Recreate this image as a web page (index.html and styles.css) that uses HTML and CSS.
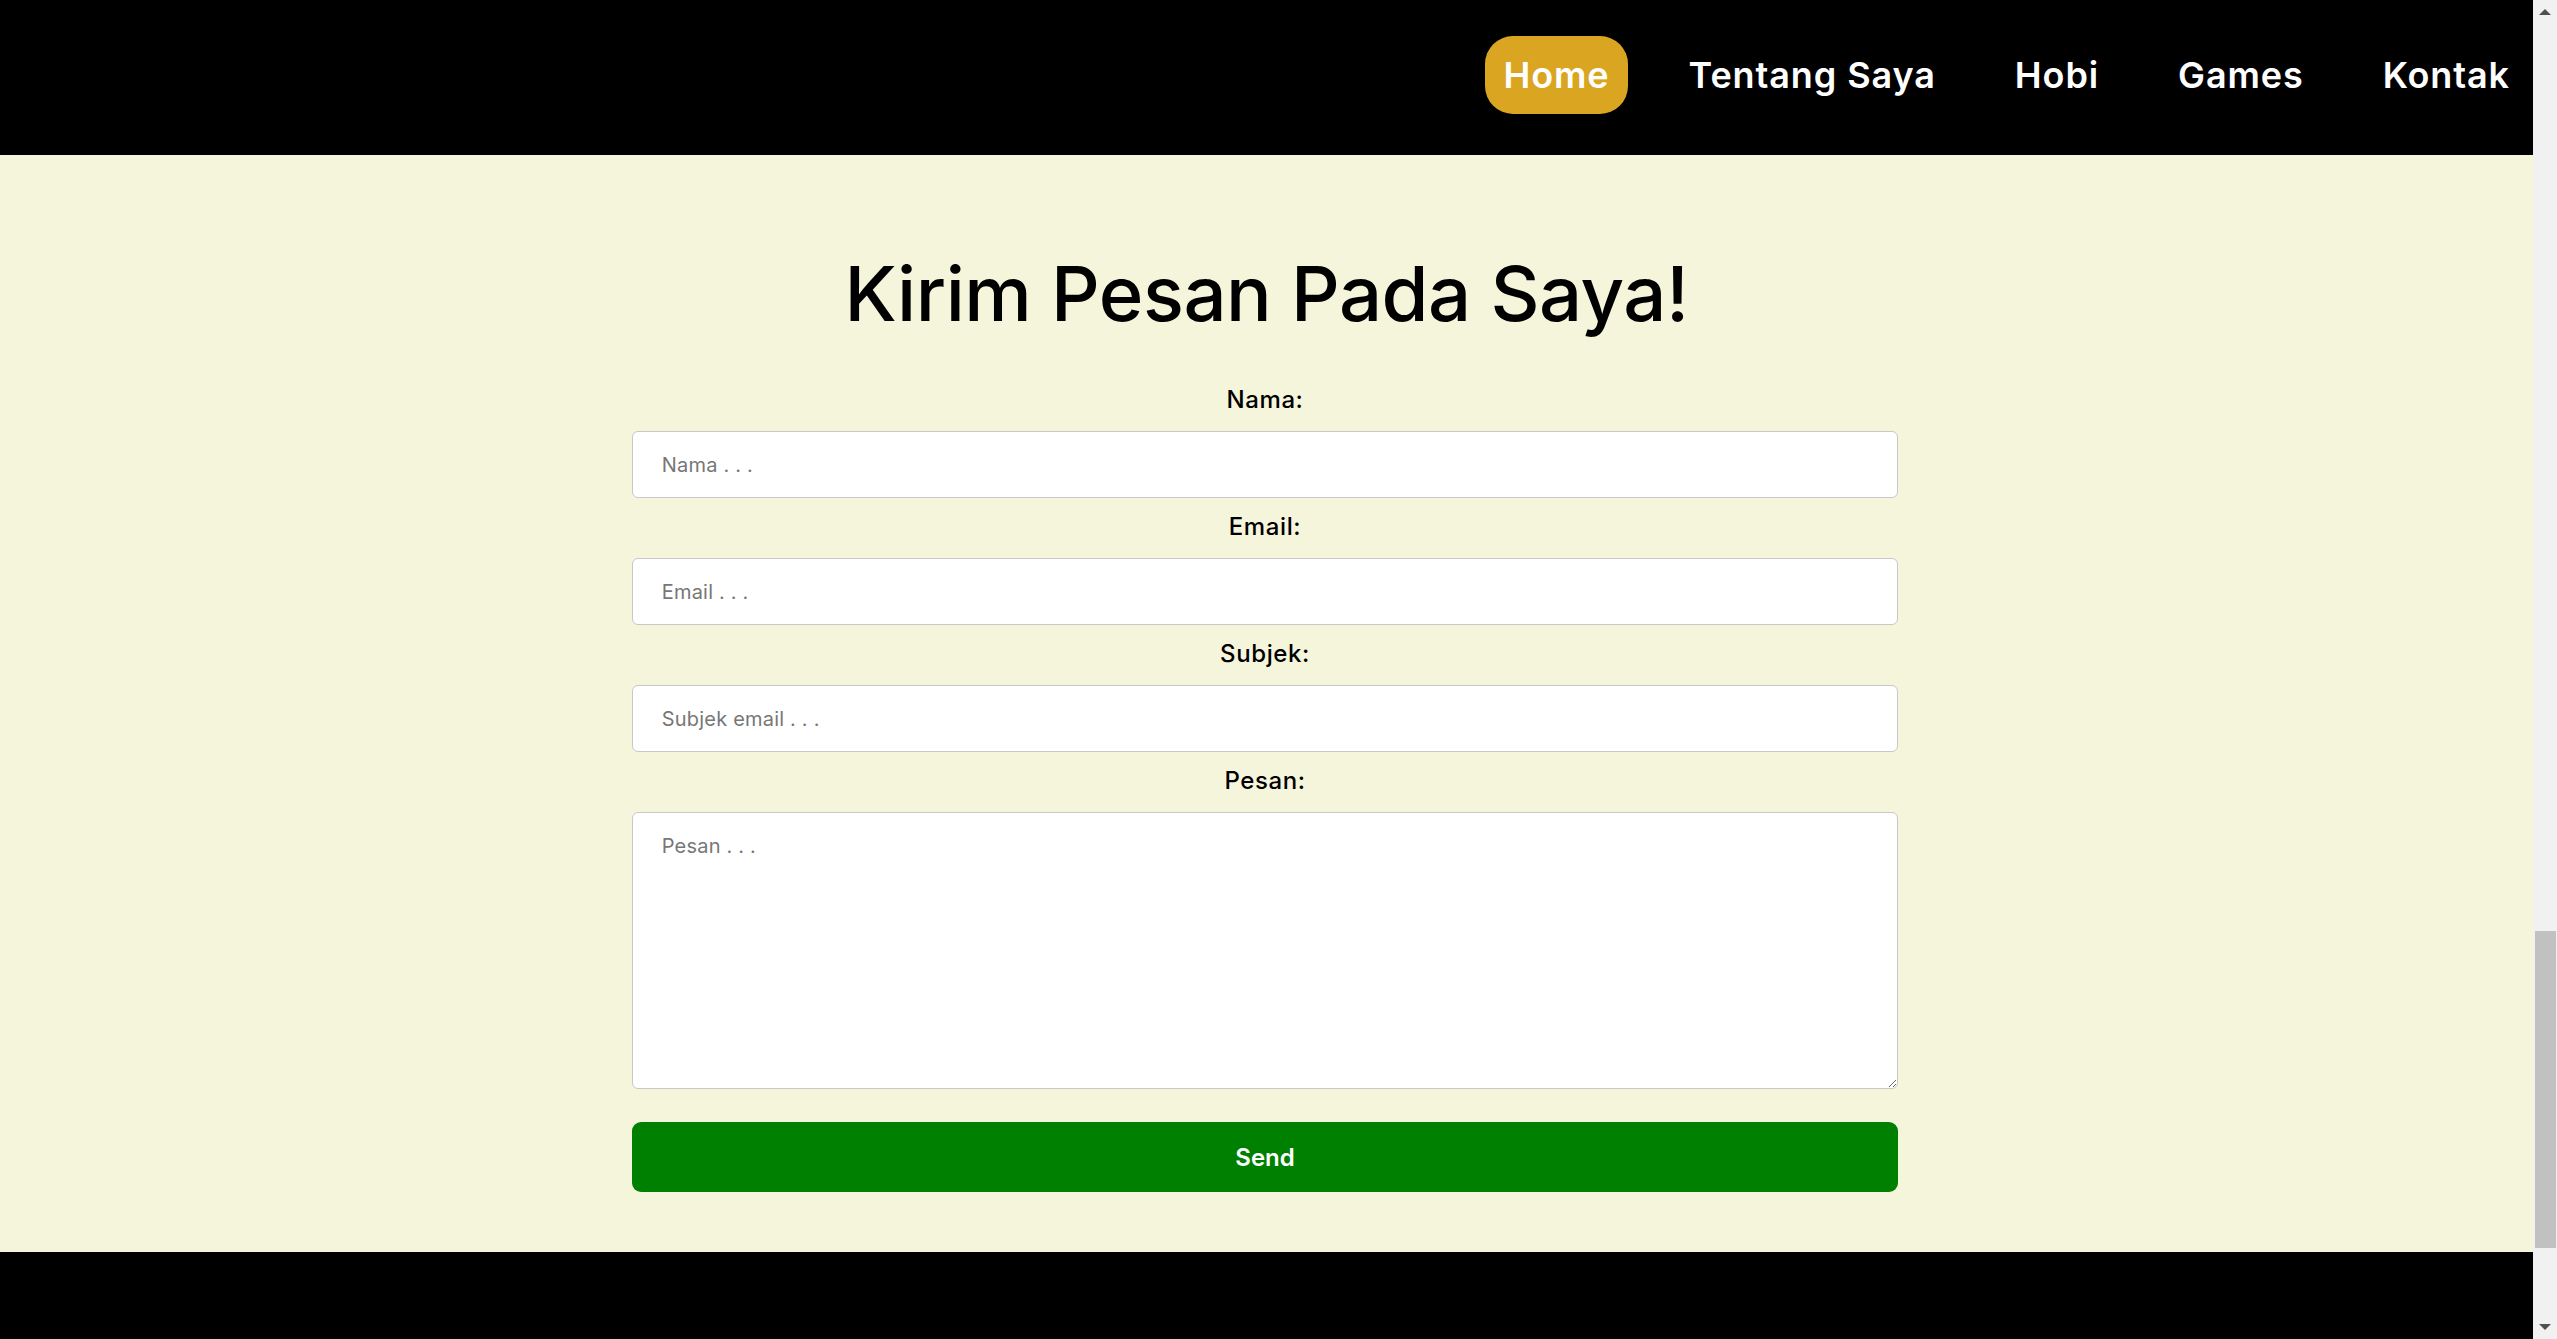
FILE: index.html
```html
<!DOCTYPE html>
<html lang="id">
<head>
<meta charset="utf-8">
<title>Kontak</title>
<link rel="stylesheet" href="styles.css">
</head>
<body>
<div class="page">
  <header class="topbar">
    <nav class="nav">
      <a class="nav-link active" href="#">Home</a>
      <a class="nav-link" href="#">Tentang Saya</a>
      <a class="nav-link" href="#">Hobi</a>
      <a class="nav-link" href="#">Games</a>
      <a class="nav-link" href="#">Kontak</a>
    </nav>
  </header>
  <main class="contact">
    <h1 class="title">Kirim Pesan Pada Saya!</h1>
    <form class="form">
      <div class="field">
        <label class="label" for="nama">Nama:</label>
        <input class="input" id="nama" type="text" placeholder="Nama . . .">
      </div>
      <div class="field">
        <label class="label" for="email">Email:</label>
        <input class="input" id="email" type="email" placeholder="Email . . .">
      </div>
      <div class="field">
        <label class="label" for="subjek">Subjek:</label>
        <input class="input" id="subjek" type="text" placeholder="Subjek email . . .">
      </div>
      <div class="field">
        <label class="label" for="pesan">Pesan:</label>
        <textarea class="input textarea" id="pesan" placeholder="Pesan . . ."></textarea>
      </div>
      <button class="send" type="button">Send</button>
    </form>
  </main>
  <footer class="footer"></footer>
</div>
<div class="scrollbar">
  <div class="sb-arrow sb-up"></div>
  <div class="sb-track"><div class="sb-thumb"></div></div>
  <div class="sb-arrow sb-down"></div>
</div>
</body>
</html>
```

FILE: styles.css
```css
* { box-sizing: border-box; }
html, body { margin: 0; padding: 0; }
body {
  display: flex;
  height: 1339px;
  overflow: hidden;
  font-family: "Inter", "Noto Sans", sans-serif;
  background: #000;
}
.page {
  flex: 1;
  display: flex;
  flex-direction: column;
  min-width: 0;
}
.topbar {
  height: 155px;
  background: #000;
  flex: none;
}
.nav {
  display: flex;
  justify-content: flex-end;
  align-items: flex-start;
  gap: 43px;
  padding: 36px 5px 0 0;
}
.nav-link {
  display: flex;
  align-items: center;
  height: 78px;
  padding: 0 18px;
  border-radius: 28px;
  color: #fff;
  text-decoration: none;
  font-weight: 600;
  font-size: 36px;
  letter-spacing: 0.9px;
}
.nav-link.active { background: #daa520; }
.contact {
  flex: 1;
  background: #f5f5dc;
  padding-top: 100px;
  display: flex;
  flex-direction: column;
  align-items: center;
}
.title {
  margin: 0 0 50px;
  font-size: 76px;
  line-height: 76px;
  font-weight: 500;
  color: #000;
  letter-spacing: -0.5px;
}
.form {
  width: 50%;
  margin-right: 3px;
  display: flex;
  flex-direction: column;
  gap: 10px;
}
.field {
  display: flex;
  flex-direction: column;
}
.label {
  text-align: center;
  font-size: 24px;
  line-height: 38px;
  font-weight: 500;
  color: #000;
  margin-bottom: 12px;
  letter-spacing: 0.6px;
}
.input {
  height: 67px;
  width: 100%;
  border: 1px solid #c8c8c8;
  border-radius: 6px;
  background: #fff;
  padding: 0 29px;
  font-family: inherit;
  font-size: 20px;
  color: #000;
}
.input::placeholder { color: #777; font-weight: 400; letter-spacing: 0.2px; }
.textarea {
  height: 277px;
  padding: 19px 29px;
  resize: vertical;
  line-height: 1.4;
}
.send {
  margin-top: 23px;
  height: 70px;
  border: 0;
  border-radius: 9px;
  background: #008000;
  color: #fff;
  font-family: inherit;
  font-weight: 600;
  font-size: 24px;
}
.footer {
  height: 87px;
  background: #000;
  flex: none;
}
.scrollbar {
  width: 24px;
  flex: none;
  background: #f1f1f1;
  display: flex;
  flex-direction: column;
}
.sb-arrow {
  height: 24px;
  flex: none;
  display: flex;
  align-items: center;
  justify-content: center;
}
.sb-up::before, .sb-down::before {
  content: "";
  width: 0;
  height: 0;
  border-left: 6px solid transparent;
  border-right: 6px solid transparent;
}
.sb-up::before { border-bottom: 6px solid #505050; }
.sb-down::before { border-top: 6px solid #505050; }
.sb-track {
  flex: 1;
  display: flex;
  flex-direction: column;
  justify-content: flex-end;
  padding: 0 1px 67px 2px;
}
.sb-thumb {
  height: 317px;
  background: #c1c1c1;
}
```
